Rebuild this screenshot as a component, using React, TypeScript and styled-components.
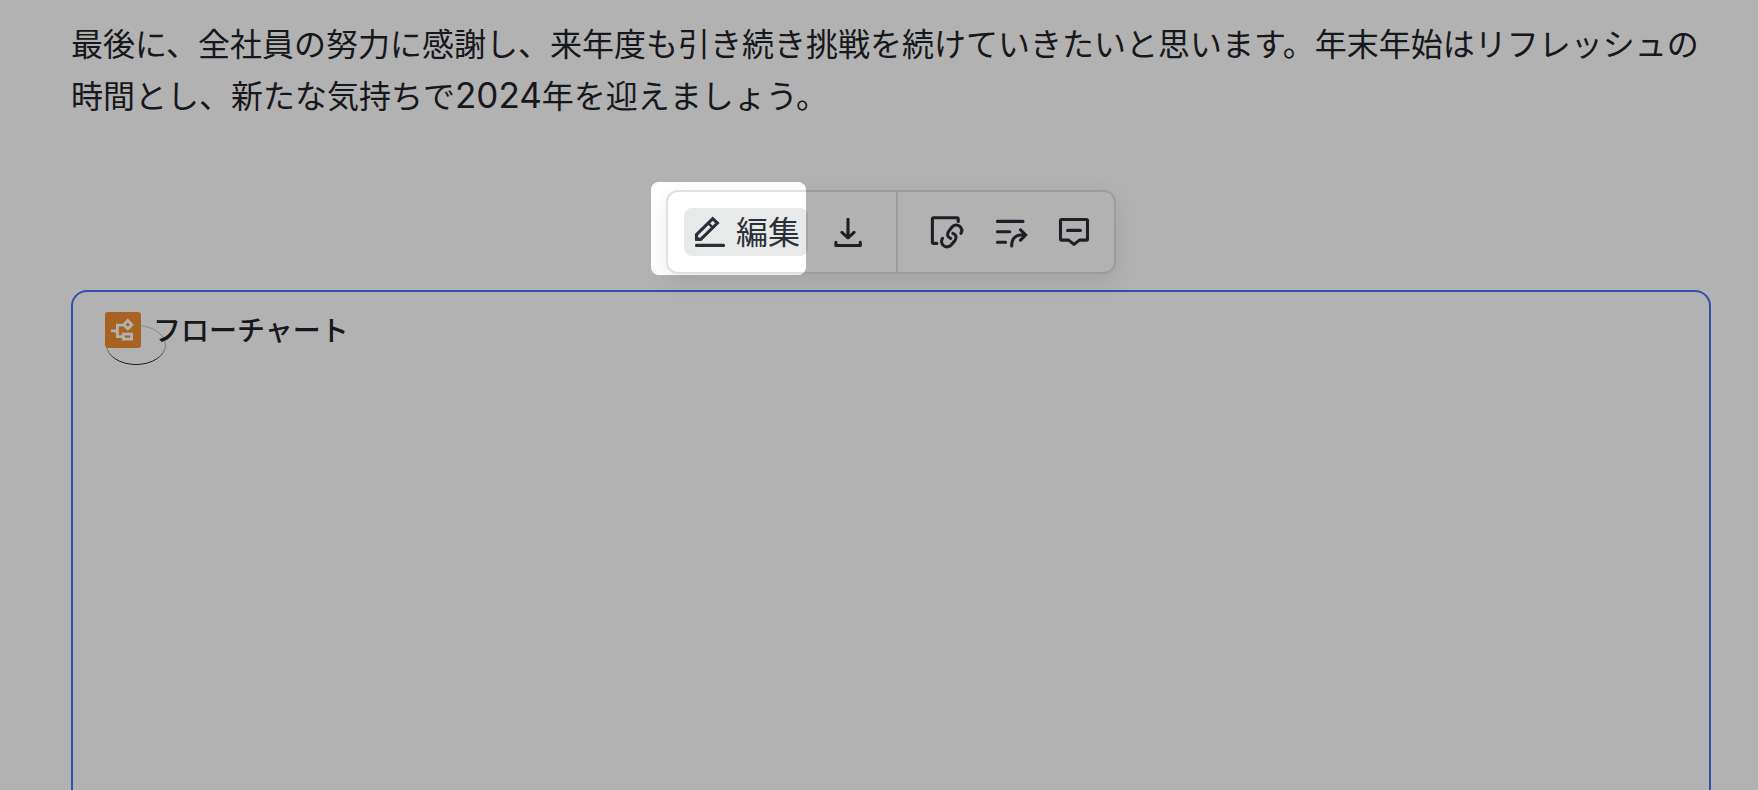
import React from "react";
import styled, { createGlobalStyle } from "styled-components";

const GlobalStyle = createGlobalStyle`
  *, *::before, *::after { box-sizing: border-box; }
  html, body { margin: 0; background: #ffffff; }
  body {
    font-family: "Noto Sans CJK JP", sans-serif;
    color: #1f2329;
    overflow-x: hidden;
  }
`;

const Page = styled.main`
  display: flex;
  flex-direction: column;
  min-height: 100vh;
  padding: 16px 47px 0 71px;
`;

const Paragraph = styled.p`
  margin: 0;
  font-size: 32px;
  line-height: 52px;
`;

const Digits = styled.span`
  font-family: Inter, sans-serif;
  font-size: 35px;
  line-height: 1;
`;

const Toolbar = styled.div`
  position: relative;
  display: flex;
  align-self: center;
  margin: 70px 0 16px;
  border: 2px solid #dee0e3;
  border-radius: 12px;
  background: #ffffff;
  box-shadow: 0 8px 24px rgba(31, 45, 41, 0.1);
`;

const ToolGroup = styled.div<{ $divided?: boolean }>`
  display: flex;
  gap: 16px;
  padding: ${(p) => (p.$divided ? "16px 16px 16px 24px" : "16px 24px 16px 16px")};
  border-left: ${(p) => (p.$divided ? "2px solid #dee0e3" : "0")};
`;

const ToolButton = styled.button<{ $active?: boolean }>`
  display: flex;
  align-items: center;
  gap: 10px;
  height: 48px;
  padding: 0 8px;
  padding-left: ${(p) => (p.$active ? "10px" : "8px")};
  border: 0;
  border-radius: 8px;
  background: ${(p) => (p.$active ? "#e8eaea" : "transparent")};
  color: #2b2f38;
  font-family: inherit;
  font-size: 32px;
  line-height: 44px;
  cursor: pointer;
`;

const ToolLabel = styled.span`
  padding-bottom: 4px;
`;

const ToolIcon = styled.svg`
  display: block;
  flex: none;
  width: 32px;
  height: 32px;
  overflow: visible;
  fill: none;
  stroke: currentColor;
  stroke-width: 3.1;
  stroke-linecap: round;
  stroke-linejoin: round;
`;

/* Cut-out of the tour mask: everything outside it is dimmed. */
const Spotlight = styled.div`
  position: absolute;
  z-index: 10;
  top: -10px;
  left: -17px;
  width: 155px;
  height: 93px;
  border-radius: 8px;
  box-shadow: 0 0 0 4000px rgba(0, 0, 0, 0.3);
  pointer-events: none;
`;

const Board = styled.section`
  flex: 1;
  min-height: 480px;
  padding: 20px 32px;
  border: 2px solid #4571f7;
  border-bottom: 0;
  border-radius: 16px 16px 0 0;
`;

const BoardHeader = styled.header`
  position: relative;
  display: flex;
  align-items: center;
  gap: 12px;
`;

const BoardTitle = styled.h2`
  margin: 0;
  padding-bottom: 2px;
  font-size: 28px;
  font-weight: 500;
  line-height: 34px;
`;

const FlowIcon = styled.svg`
  position: relative;
  flex: none;
  width: 36px;
  height: 36px;
  border-radius: 3px;
  background: #f18f33;
  fill: none;
  stroke: #ffffff;
  stroke-width: 2.8;
`;

const Ring = styled.svg`
  position: absolute;
  top: 12px;
  left: 0;
  width: 62px;
  height: 42px;
  fill: none;
`;

export default function App() {
  return (
    <>
      <GlobalStyle />
      <Page>
        <Paragraph>
          最後に、全社員の努力に感謝し、来年度も引き続き挑戦を続けていきたいと思います。年末年始はリフレッシュの時間とし、新たな気持ちで<Digits>2024</Digits>年を迎えましょう。
        </Paragraph>

        <Toolbar role="toolbar" aria-label="フローチャート">
          <ToolGroup>
            <ToolButton type="button" $active>
              <ToolIcon viewBox="0 0 32 32" aria-hidden="true">
                <path d="M2.5 18.6 18.7 2.6 23.4 7.1 7 23.2H2.5Z" strokeLinejoin="miter" />
                <path d="M14.3 7.2 18.8 11.6" strokeWidth="2.4" />
                <path d="M1 17.8 8 24.7H2.2Q1 24.7 1 23.4Z" fill="currentColor" stroke="none" />
                <path d="M2.5 29.4H29.5" />
              </ToolIcon>
              <ToolLabel>編集</ToolLabel>
            </ToolButton>
            <ToolButton type="button" aria-label="ダウンロード">
              <ToolIcon viewBox="0 0 32 32" aria-hidden="true">
                <path d="M16 3.3V21.6M9.9 16.3 16 21.9 22.1 16.3M3.9 26.2V29.5H28.3V26.2" />
              </ToolIcon>
            </ToolButton>
          </ToolGroup>
          <ToolGroup $divided>
            <ToolButton type="button" aria-label="リンクをコピー">
              <ToolIcon viewBox="0 0 32 32" aria-hidden="true">
                <path d="M6.8 27.4H3.6Q2.4 27.4 2.4 26.2V3Q2.4 1.8 3.6 1.8H27Q28.2 1.8 28.2 3V5.4" />
                <path d="M20.7 22.4C17.4 21.4 16.6 18.2 18.5 15.6L22 11C24.2 8.3 27.6 8.4 29.8 10.4C31.9 12.4 32.4 15 30.9 17.4" />
                <path d="M22.9 17.4C26.2 18.5 27 21.5 25 24.4L21.6 28.6C19.5 31.3 16 31.5 13.6 29.6C11.4 27.8 10.9 24.8 12.5 22.4" />
              </ToolIcon>
            </ToolButton>
            <ToolButton type="button" aria-label="共有">
              <ToolIcon viewBox="0 0 32 32" aria-hidden="true">
                <path d="M3.4 5.4H29M3.4 15.7H15.8M3.4 26.3H11.6" />
                <path d="M17.7 30C17.7 23 21.4 19 27 19H31.5M26.5 13.9 31.8 19 26.5 24.1" />
              </ToolIcon>
            </ToolButton>
            <ToolButton type="button" aria-label="コメント">
              <ToolIcon viewBox="0 0 32 32" aria-hidden="true">
                <path d="M3.6 3.5H28.4Q29.5 3.5 29.5 4.6V23Q29.5 24.1 28.4 24.1H21.4L16 28.4 10.6 24.1H3.6Q2.5 24.1 2.5 23V4.6Q2.5 3.5 3.6 3.5Z" />
                <path d="M9.6 14.4H22.4" />
              </ToolIcon>
            </ToolButton>
          </ToolGroup>
          <Spotlight />
        </Toolbar>

        <Board>
          <BoardHeader>
            <Ring viewBox="0 0 62 42" aria-hidden="true">
              <defs>
                <linearGradient id="ring" x1="0" y1="0" x2="0" y2="1">
                  <stop offset="0" stopColor="#1f2329" stopOpacity="0.25" />
                  <stop offset="0.6" stopColor="#1f2329" stopOpacity="0.35" />
                  <stop offset="0.9" stopColor="#1f2329" stopOpacity="1" />
                </linearGradient>
              </defs>
              <ellipse cx="31" cy="21" rx="29.5" ry="19.5" stroke="url(#ring)" />
            </Ring>
            <FlowIcon viewBox="0 0 36 36" aria-hidden="true">
              <path d="M6 18.8H12.2M17.8 13.1H12.4V24.7H17.6" />
              <path d="M22.8 8.6 26.9 12.7 22.8 16.8 18.7 12.7Z" />
              <path d="M18.4 22.2H26.6V27.2H18.4Z" />
            </FlowIcon>
            <BoardTitle>フローチャート</BoardTitle>
          </BoardHeader>
        </Board>
      </Page>
    </>
  );
}
